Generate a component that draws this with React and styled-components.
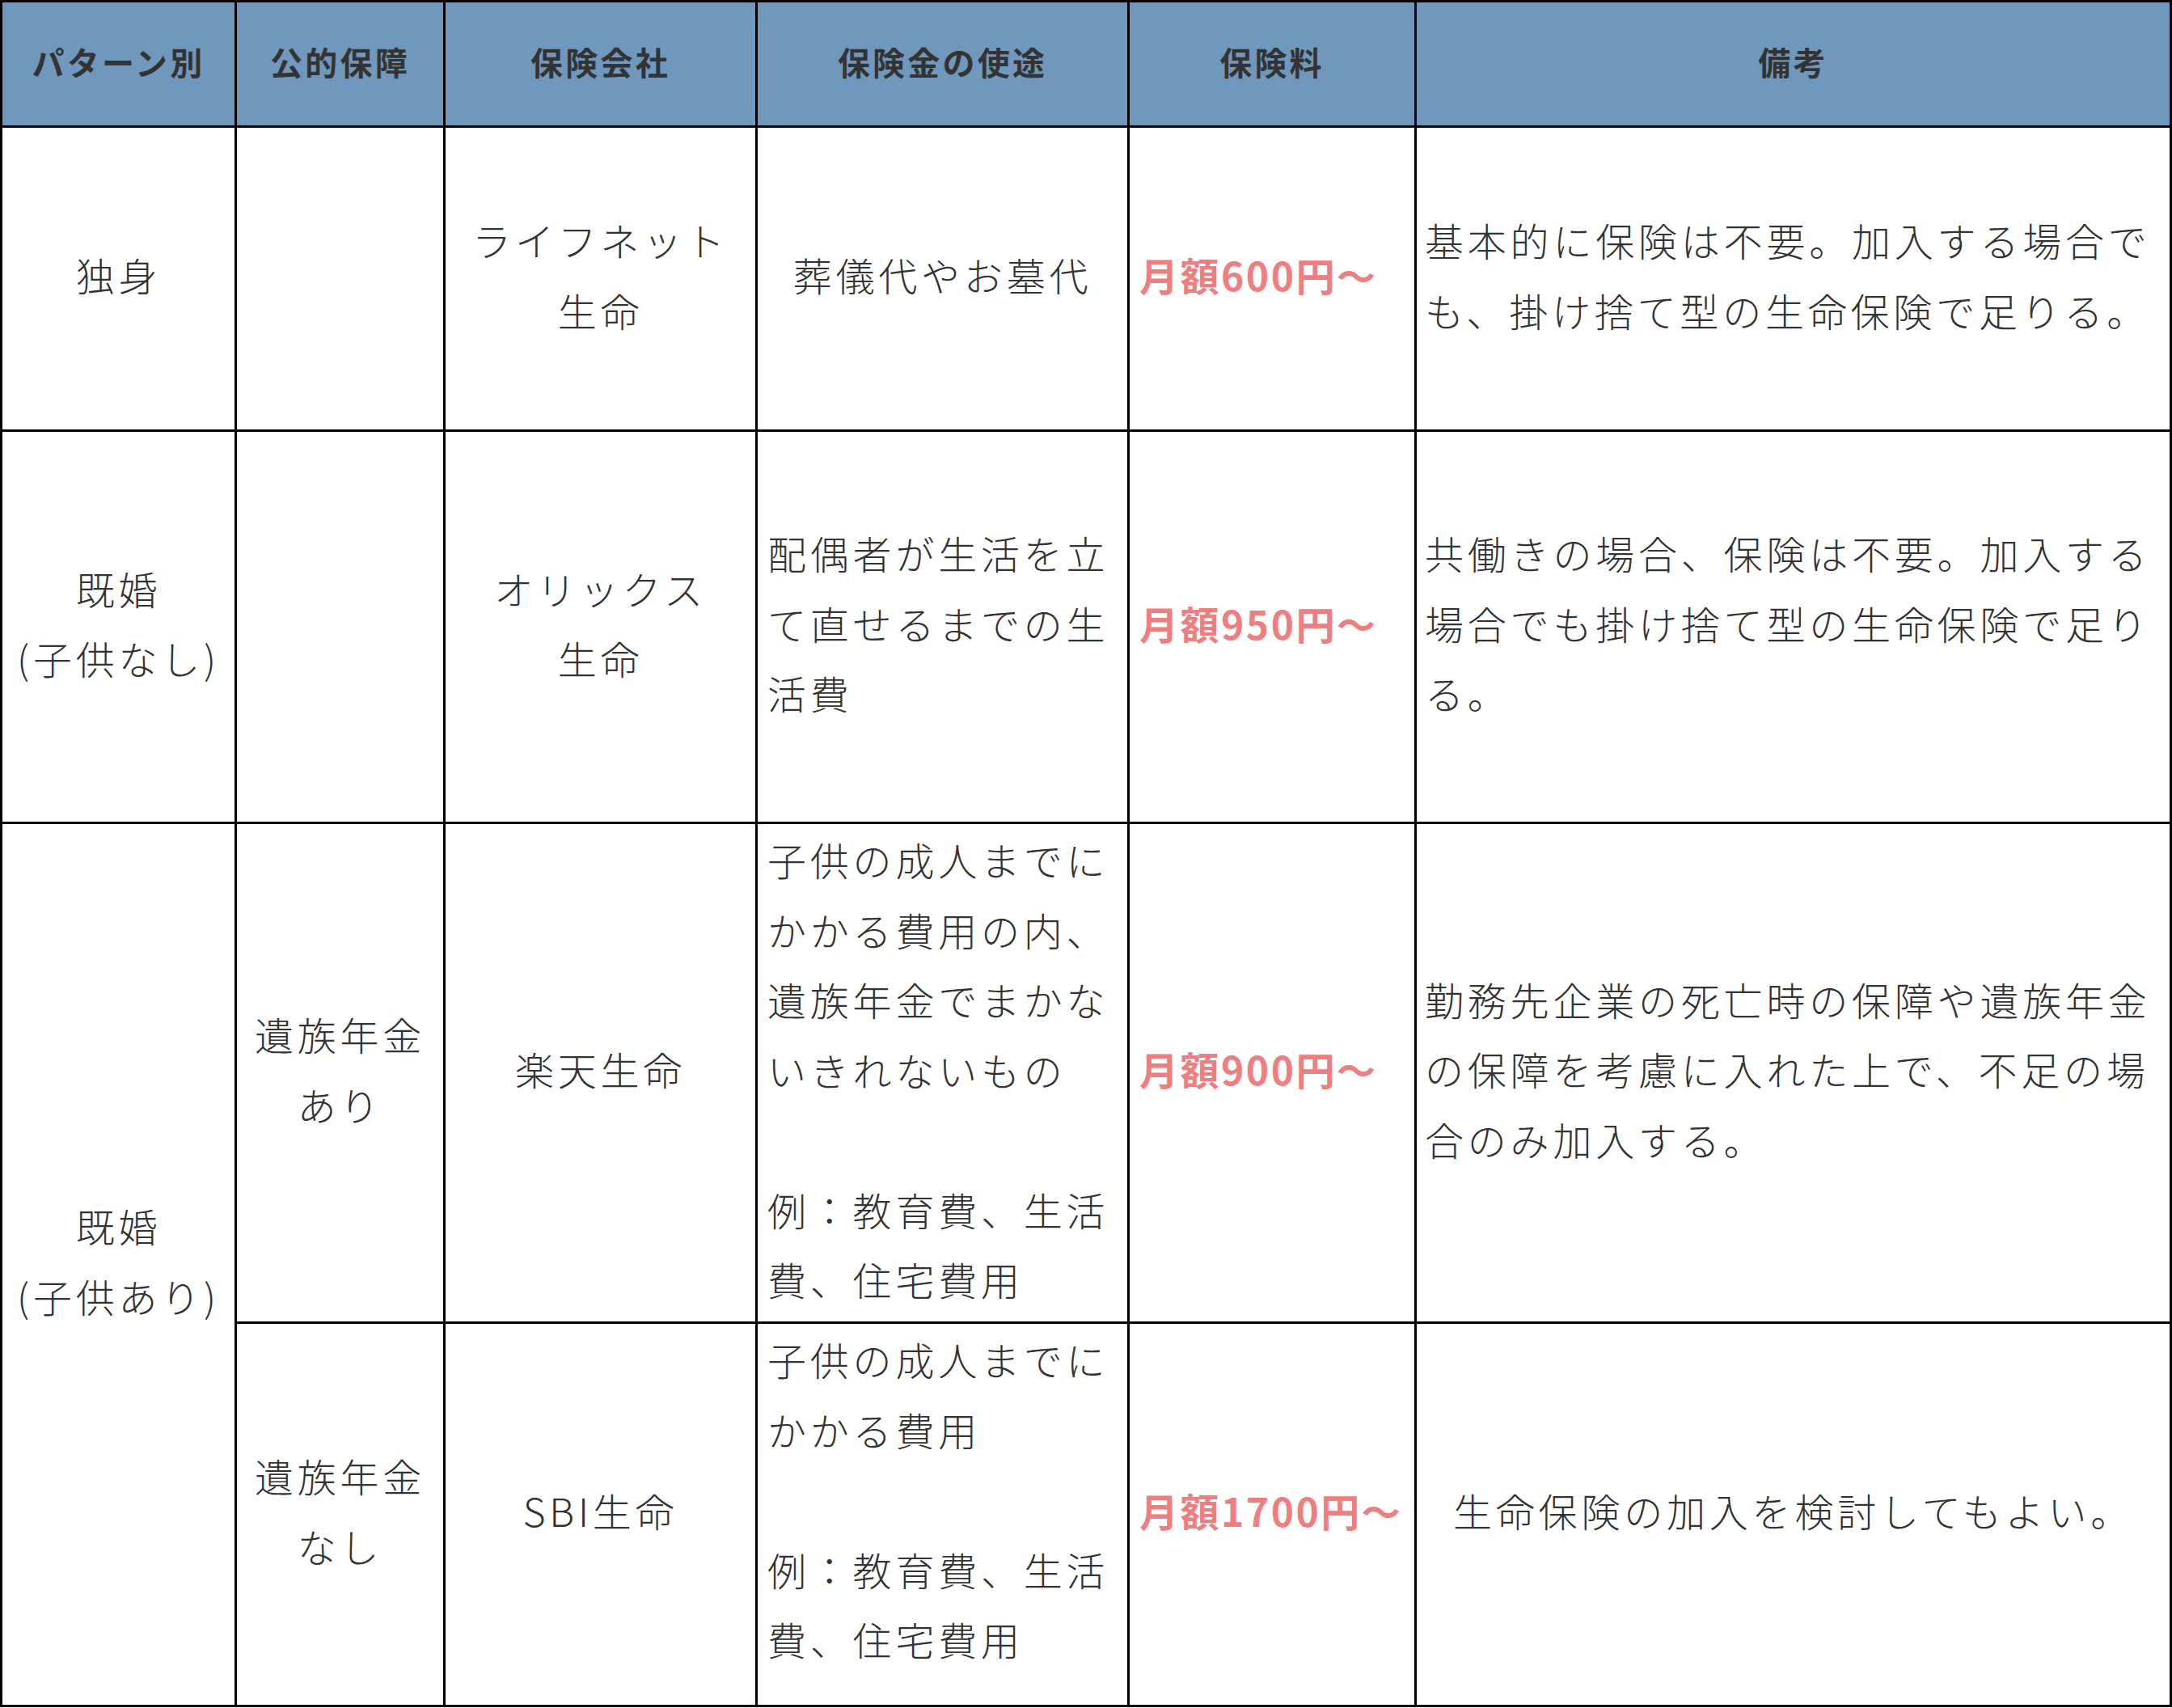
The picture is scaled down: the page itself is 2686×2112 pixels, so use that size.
import styled, { createGlobalStyle } from "styled-components";

const GlobalStyle = createGlobalStyle`
  html, body {
    margin: 0;
    padding: 0;
    background: #fff;
  }
  body {
    font-family: "Noto Sans CJK JP", "Noto Sans", sans-serif;
    color: #333;
  }
`;

const Table = styled.table`
  width: 2686px;
  table-layout: fixed;
  border-collapse: separate;
  border-spacing: 0;
  border-top: 3px solid #000;
  border-left: 3px solid #000;
  font-family: "Noto Sans CJK JP", "Noto Sans", sans-serif;
`;

const Row = styled.tr`
  height: ${(p) => p.$h}px;
`;

const HeadCell = styled.th`
  box-sizing: border-box;
  background: #7097bc;
  color: #333;
  font-size: 40px;
  font-weight: 700;
  letter-spacing: 3.2px;
  text-align: center;
  vertical-align: middle;
  padding: 0 10px 6px;
  border-right: 3px solid #000;
  border-bottom: 3px solid #000;
`;

const Cell = styled.td`
  box-sizing: border-box;
  font-size: 48px;
  font-weight: 300;
  line-height: 86.5px;
  letter-spacing: 4.8px;
  color: #333;
  text-align: ${(p) => p.$align || "center"};
  vertical-align: ${(p) => (p.$top ? "top" : "middle")};
  padding: 0 ${(p) => (p.$pad ?? 12)}px ${(p) => (p.$top ? 0 : 10)}px;
  border-right: 3px solid #000;
  border-bottom: 3px solid #000;
`;

const Price = styled(Cell)`
  font-weight: 700;
  letter-spacing: 2.5px;
  color: #ef7e80;
  white-space: nowrap;
`;

const cols = [290, 258, 386, 460, 355, 934];
const heads = ["パターン別", "公的保障", "保険会社", "保険金の使途", "保険料", "備考"];

export default function App() {
  return (
    <>
      <GlobalStyle />
      <Table>
        <colgroup>
          {cols.map((w, i) => (
            <col key={i} style={{ width: w }} />
          ))}
        </colgroup>
        <thead>
          <Row $h={155}>
            {heads.map((h) => (
              <HeadCell key={h}>{h}</HeadCell>
            ))}
          </Row>
        </thead>
        <tbody>
          <Row $h={376}>
            <Cell>独身</Cell>
            <Cell />
            <Cell>
              ライフネット
              <br />
              生命
            </Cell>
            <Cell>葬儀代やお墓代</Cell>
            <Price $align="left">月額600円〜</Price>
            <Cell $align="left" $pad={10}>
              基本的に保険は不要。加入する場合でも、掛け捨て型の生命保険で足りる。
            </Cell>
          </Row>
          <Row $h={485}>
            <Cell>
              既婚
              <br />
              (子供なし)
            </Cell>
            <Cell />
            <Cell>
              オリックス
              <br />
              生命
            </Cell>
            <Cell $align="left">配偶者が生活を立て直せるまでの生活費</Cell>
            <Price $align="left">月額950円〜</Price>
            <Cell $align="left" $pad={10}>
              共働きの場合、保険は不要。加入する場合でも掛け捨て型の生命保険で足りる。
            </Cell>
          </Row>
          <Row $h={618}>
            <Cell rowSpan={2}>
              既婚
              <br />
              (子供あり)
            </Cell>
            <Cell>
              遺族年金
              <br />
              あり
            </Cell>
            <Cell>楽天生命</Cell>
            <Cell $align="left" $top>
              子供の成人までにかかる費用の内、遺族年金でまかないきれないもの
              <br />
              <br />
              例：教育費、生活費、住宅費用
            </Cell>
            <Price $align="left">月額900円〜</Price>
            <Cell $align="left" $pad={10}>
              勤務先企業の死亡時の保障や遺族年金の保障を考慮に入れた上で、不足の場合のみ加入する。
            </Cell>
          </Row>
          <Row $h={474}>
            <Cell>
              遺族年金
              <br />
              なし
            </Cell>
            <Cell>SBI生命</Cell>
            <Cell $align="left" $top>
              子供の成人までに
              <br />
              かかる費用
              <br />
              <br />
              例：教育費、生活費、住宅費用
            </Cell>
            <Price $align="left">月額1700円〜</Price>
            <Cell $pad={10}>生命保険の加入を検討してもよい。</Cell>
          </Row>
        </tbody>
      </Table>
    </>
  );
}
